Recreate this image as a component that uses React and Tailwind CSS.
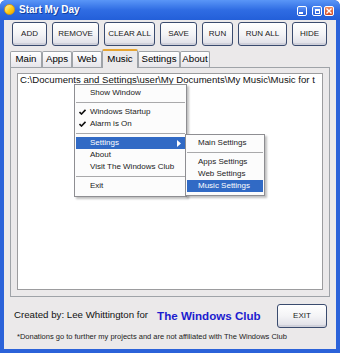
import React from "react";

function Btn({ w, children }) {
  return (
    <div
      className={`${w} h-[24px] flex items-center justify-center rounded-[3px] border border-[#3a4b6e] bg-gradient-to-b from-[#ffffff] via-[#f4f4f6] to-[#dedee6] text-[8px] text-[#1a1a1a] shadow-[inset_0_-2px_0_#cfd0da]`}
    >
      {children}
    </div>
  );
}

function Tab({ w, children, selected }) {
  if (selected) {
    return (
      <div
        className={`${w} h-[19px] relative z-10 -mb-[1px] flex items-center justify-center border border-b-0 border-[#9fa3a8] border-t-[#e6a432] border-t-2 rounded-t-[2px] bg-[#ebe9ea] text-[9.7px] text-black`}
      >
        <span className="-mt-[1px]">{children}</span>
      </div>
    );
  }
  return (
    <div
      className={`${w} h-[16px] flex items-center justify-center border border-b-0 border-[#9fa3a8] rounded-t-[2px] bg-gradient-to-b from-[#ffffff] to-[#e6e5ea] text-[9.7px] text-black`}
    >
      {children}
    </div>
  );
}

function Check() {
  return (
    <svg width="7" height="6" viewBox="0 0 7 6" className="absolute left-[3px] top-[3px]">
      <path d="M0.5 3 L2.5 5 L6.5 0.8" stroke="#111" strokeWidth="1.6" fill="none" />
    </svg>
  );
}

function Item({ children, check, hl, arrow, pl = "pl-[14px]" }) {
  return (
    <div
      className={`relative h-[12px] mx-[1px] flex items-center ${pl} text-[8px] leading-[12px] ${
        hl ? "bg-[#316ac5] text-white" : "text-[#222]"
      }`}
    >
      {check && <Check />}
      <span>{children}</span>
      {arrow && (
        <svg width="4" height="7" viewBox="0 0 4 7" className="absolute right-[4px] top-[2.5px]">
          <path d="M0 0 L4 3.5 L0 7 Z" fill="#fff" />
        </svg>
      )}
    </div>
  );
}

function Sep({ h = "h-[7px]" }) {
  return (
    <div className={`${h} flex items-center px-[1px]`}>
      <div className="h-[1px] w-full bg-[#a9a9ab]" />
    </div>
  );
}

export default function App() {
  return (
    <div className="relative w-[340px] h-[353px] overflow-hidden font-['Liberation_Sans',Arial,sans-serif] bg-[#2b62d9] rounded-t-[6px] flex flex-col">
      {/* Title bar */}
      <div className="h-[20px] flex items-start bg-gradient-to-b from-[#5a96f7] via-[#2f6ce3] to-[#235fd9] rounded-t-[6px]">
        <div className="ml-[4px] mt-[4px] w-[11px] h-[11px] rounded-full bg-gradient-to-br from-[#fff4a0] via-[#ffd21a] to-[#e8a200] border border-[#d69a10]" />
        <div className="ml-[4px] mt-[2px] text-[10px] font-bold text-white leading-[16px] [text-shadow:1px_1px_0_#1040a0]">
          Start My Day
        </div>
        <div className="flex-1" />
        <div className="mt-[6px] w-[10px] h-[10px] rounded-[2px] border border-white bg-gradient-to-b from-[#5d93f5] to-[#2258d6] relative">
          <div className="absolute left-[1px] bottom-[1px] w-[4px] h-[2px] bg-white" />
        </div>
        <div className="ml-[5px] mt-[6px] w-[10px] h-[10px] rounded-[2px] border border-white bg-gradient-to-b from-[#5d93f5] to-[#2258d6] flex items-center justify-center">
          <div className="w-[5px] h-[5px] border border-white border-t-2" />
        </div>
        <div className="ml-[2px] mr-[6px] mt-[6px] w-[10px] h-[10px] rounded-[2px] border border-white bg-gradient-to-b from-[#f08a5e] to-[#d2451e] flex items-center justify-center">
          <svg width="6" height="6" viewBox="0 0 6 6">
            <path d="M0.5 0.5 L5.5 5.5 M5.5 0.5 L0.5 5.5" stroke="#fff" strokeWidth="1.4" />
          </svg>
        </div>
      </div>

      {/* Body */}
      <div className="mx-[4px] mb-[4px] flex-1 bg-[#ebe9ea] flex flex-col">
        <div className="mt-[2px] ml-[8px] flex gap-[5px]">
          <Btn w="w-[35px]">ADD</Btn>
          <Btn w="w-[47px]">REMOVE</Btn>
          <Btn w="w-[51px]">CLEAR ALL</Btn>
          <Btn w="w-[37px]">SAVE</Btn>
          <Btn w="w-[31px]">RUN</Btn>
          <Btn w="w-[49px]">RUN ALL</Btn>
          <Btn w="w-[35px]">HIDE</Btn>
        </div>

        <div className="mt-[2px] ml-[6px] h-[19px] flex items-end">
          <Tab w="w-[32px]">Main</Tab>
          <Tab w="w-[30px]">Apps</Tab>
          <Tab w="w-[30px]">Web</Tab>
          <Tab w="w-[36px]" selected>Music</Tab>
          <Tab w="w-[42px]">Settings</Tab>
          <Tab w="w-[30px]">About</Tab>
        </div>

        <div className="mx-[6px] h-[230px] border border-[#9fa3a8] pt-[5px] px-[6px] pb-[6px] flex">
          <div className="flex-1 bg-white border border-[#9c9c9e] overflow-hidden">
            <div className="pl-[2px] text-[9.6px] leading-[12px] text-[#111] whitespace-nowrap">
              C:\Documents and Settings\user\My Documents\My Music\Music for t
            </div>
          </div>
        </div>

        <div className="mt-[7px] h-[23px] flex items-center">
          <div className="ml-[10px] text-[9.7px] text-[#111] whitespace-nowrap">
            Created by: Lee Whittington for
          </div>
          <div className="ml-[9px] text-[11.6px] font-bold text-[#1c1ccf] whitespace-nowrap">
            The Windows Club
          </div>
          <div className="flex-1" />
          <div className="mr-[9px]">
            <Btn w="w-[50px]">EXIT</Btn>
          </div>
        </div>

        <div className="mt-[5px] ml-[13px] text-[7.5px] leading-[10px] text-[#222] whitespace-nowrap">
          *Donations go to further my projects and are not affiliated with The Windows Club
        </div>
      </div>

      {/* Context menu */}
      <div className="absolute left-[74px] top-[84px] w-[113px] h-[113px] bg-[#fcfcfc] border border-[#8e8e92] pt-[2px] shadow-[2px_2px_2px_rgba(0,0,0,0.25)]">
        <Item>Show Window</Item>
        <Sep />
        <Item check>Windows Startup</Item>
        <Item check>Alarm is On</Item>
        <Sep />
        <Item hl arrow>Settings</Item>
        <Item>About</Item>
        <Item>Visit The Windows Club</Item>
        <Sep />
        <Item>Exit</Item>
      </div>

      {/* Submenu */}
      <div className="absolute left-[185px] top-[134px] w-[80px] h-[62px] bg-[#fcfcfc] border border-[#8e8e92] pt-[2px] shadow-[2px_2px_2px_rgba(0,0,0,0.25)]">
        <Item pl="pl-[11px]">Main Settings</Item>
        <Sep />
        <Item pl="pl-[11px]">Apps Settings</Item>
        <Item pl="pl-[11px]">Web Settings</Item>
        <Item pl="pl-[11px]" hl>Music Settings</Item>
      </div>
    </div>
  );
}
